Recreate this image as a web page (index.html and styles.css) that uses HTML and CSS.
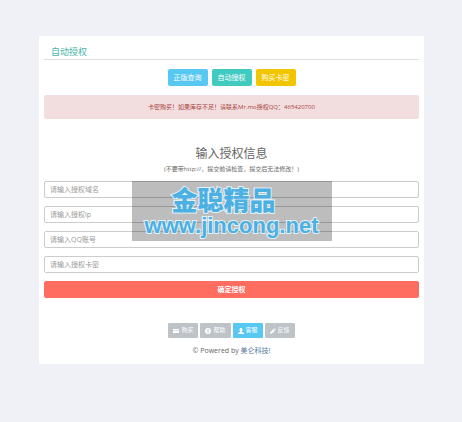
FILE: index.html
```html
<!DOCTYPE html>
<html lang="zh-CN">
<head>
<meta charset="utf-8">
<title>自动授权</title>
<link rel="stylesheet" href="styles.css">
</head>
<body>
<main class="card">
  <h1 class="title">自动授权</h1>
  <nav class="tabs">
    <a class="btn blue" href="#query">正版查询</a>
    <a class="btn green" href="#auth">自动授权</a>
    <a class="btn yellow" href="#buy">购买卡密</a>
  </nav>
  <p class="alert">卡密购买！如果库存不足！请联系Mr.mo授权QQ：465420700</p>
  <h2 class="heading">输入授权信息</h2>
  <p class="hint">(不要带http://，提交前请检查，提交后无法修改！)</p>
  <form class="form">
    <input type="text" placeholder="请输入授权域名" aria-label="请输入授权域名">
    <input type="text" placeholder="请输入授权ip" aria-label="请输入授权ip">
    <input type="text" placeholder="请输入QQ账号" aria-label="请输入QQ账号">
    <input type="text" placeholder="请输入授权卡密" aria-label="请输入授权卡密">
    <button class="submit" type="submit">确定授权</button>
    <div class="watermark">
      <span class="brand">金聪精品</span>
      <span class="site">www.jincong.net</span>
    </div>
  </form>
  <nav class="links">
    <a class="link" href="#shop"><svg viewBox="0 0 12 12"><path d="M0 2h12v2H0zM0 5h12v5H0z"/></svg>购买</a>
    <a class="link" href="#help"><svg viewBox="0 0 12 12"><path fill-rule="evenodd" d="M6 0a6 6 0 1 0 0 12A6 6 0 0 0 6 0zM5 2h2v5H5zM5 8h2v2H5z"/></svg>帮助</a>
    <a class="link active" href="#service"><svg viewBox="0 0 12 12"><path d="M6 0c2 0 3 1.500 3 3.500S8 6.500 7.500 7v1L12 10v2H0v-2l4.500-2V7C4 6.500 3 5.500 3 3.500S4 0 6 0z"/></svg>客服</a>
    <a class="link" href="#feedback"><svg viewBox="0 0 12 12"><path d="M0 12l1-4 6-6 3 3-6 6zM8 1l1-1 3 3-1 1z"/></svg>反馈</a>
  </nav>
  <footer class="footer">© Powered by <a href="#home">美仑科技!</a></footer>
</main>
</body>
</html>
```
FILE: styles.css
```css
* { box-sizing: border-box; }
body {
  margin: 0;
  padding: 36px 38px 36px 39px;
  background: #f0f1f7;
  color: #666;
  font: 7px/10px "Open Sans", "Noto Sans CJK SC", sans-serif;
}
.card { padding: 8px 5px; background: #fff; }
.title {
  margin: 0;
  padding: 1px 7px 0;
  border-bottom: 1px solid #dcdde0;
  color: #48b5a8;
  font-size: 9px;
  font-weight: 400;
  line-height: 14px;
}
.tabs { display: flex; justify-content: center; gap: 4px; margin-top: 9px; }
.btn {
  padding: 0 6px;
  border-radius: 2px;
  color: #fff;
  line-height: 17px;
  text-decoration: none;
}
.blue { background: #57c8f2; }
.green { background: #41cac0; }
.yellow { background: #f1c500; }
.alert {
  margin: 9px 0 0;
  border-radius: 2px;
  background: #f2dede;
  color: #a94442;
  font-size: 6px;
  line-height: 24px;
  text-align: center;
}
.heading {
  margin: 26px 0 0;
  font-size: 12px;
  font-weight: 400;
  line-height: 18px;
  text-align: center;
}
.hint { margin: 1px 0 0; font-size: 6px; text-align: center; }
.form { position: relative; display: grid; gap: 8px; margin-top: 7px; }
.form input {
  width: 100%;
  height: 17px;
  padding: 0 5px;
  border: 1px solid #ccc;
  border-radius: 2px;
  background: #fff;
  font: inherit;
}
.form input::placeholder { color: #999; opacity: 1; }
.submit {
  height: 17px;
  padding: 0;
  border: 0;
  border-radius: 2px;
  background: #ff6c60;
  color: #fff;
  font: inherit;
  font-weight: 700;
}
.watermark {
  position: absolute;
  top: 0;
  left: 50%;
  width: 200px;
  height: 60px;
  margin-left: -100px;
  padding: 6px 0 0;
  background: rgba(0, 0, 0, 0.26);
  color: #4db0e2;
  font-weight: 900;
  text-align: center;
  pointer-events: none;
  -webkit-text-stroke: 2px #e4f2fa;
  paint-order: stroke fill;
}
.watermark span { display: block; }
.brand { padding-right: 16px; font-size: 26px; line-height: 27px; }
.site { font-family: "Liberation Sans", sans-serif; font-size: 22px; line-height: 24px; }
.links { display: flex; justify-content: center; gap: 2px; margin-top: 25px; }
.link {
  display: flex;
  align-items: center;
  gap: 2px;
  padding: 0 5px;
  border-radius: 1px;
  background: #bdc3c7;
  color: #fff;
  font-size: 6px;
  line-height: 15px;
  text-decoration: none;
}
.link svg { width: 6px; height: 6px; fill: currentColor; }
.link.active { background: #57c8f2; }
.footer { margin-top: 8px; text-align: center; }
.footer a { color: #52789a; text-decoration: none; }
```
